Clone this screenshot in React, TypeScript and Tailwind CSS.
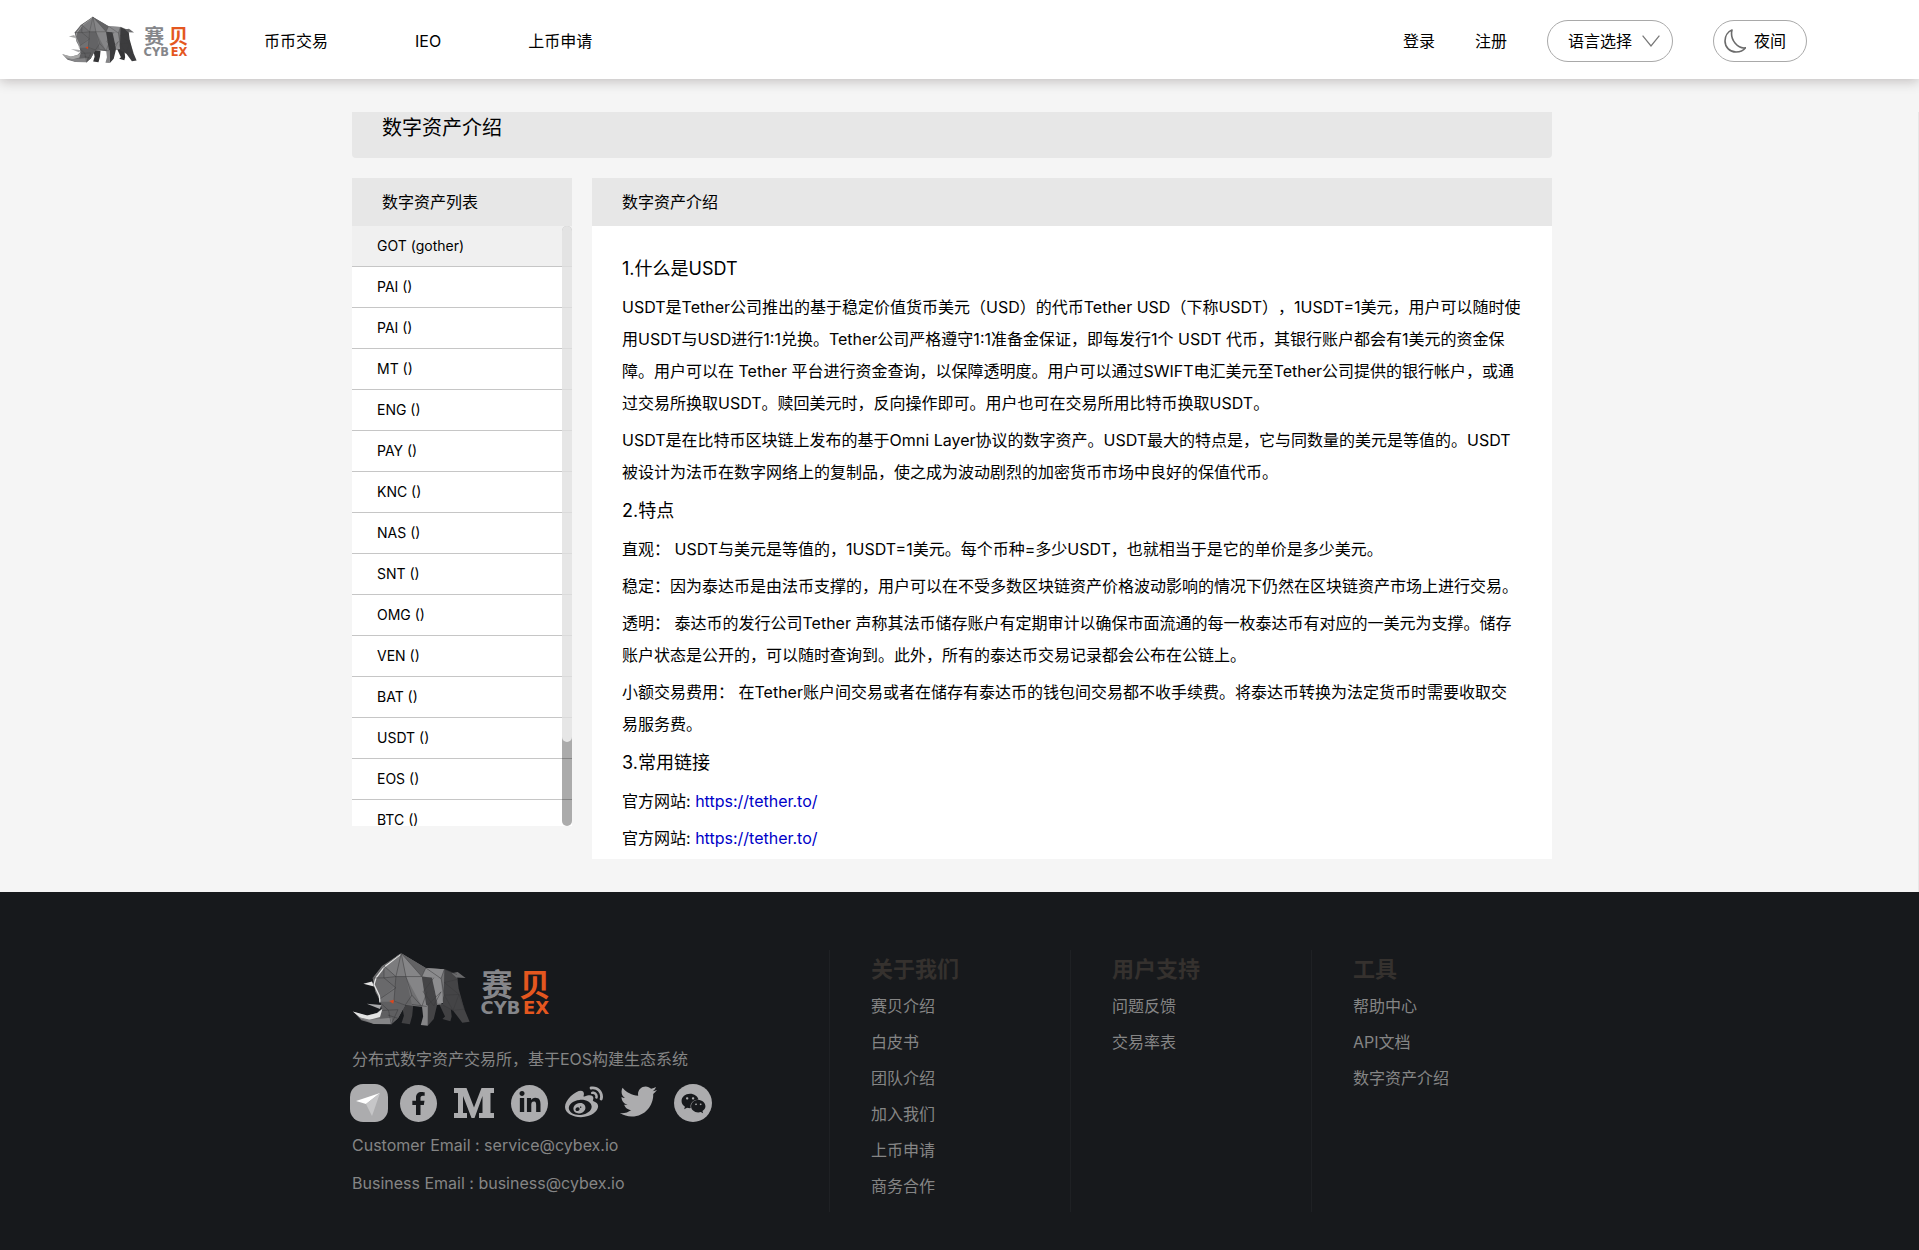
import React from "react";
import { FaFacebookF, FaLinkedinIn, FaTwitter, FaWeibo, FaWeixin } from "react-icons/fa";

type Tone = "light" | "dark";

const assets = [
  "GOT (gother)", "PAI ()", "PAI ()", "MT ()", "ENG ()", "PAY ()", "KNC ()", "NAS ()",
  "SNT ()", "OMG ()", "VEN ()", "BAT ()", "USDT ()", "EOS ()", "BTC ()",
];

const footerColumns = [
  { title: "关于我们", links: ["赛贝介绍", "白皮书", "团队介绍", "加入我们", "上币申请", "商务合作"] },
  { title: "用户支持", links: ["问题反馈", "交易率表"] },
  { title: "工具", links: ["帮助中心", "API文档", "数字资产介绍"] },
];

function Logo({ tone, className }: { tone: Tone; className: string }) {
  const rear = tone === "light" ? "#3c3c3e" : "#444446";
  const far = tone === "light" ? "#343436" : "#414143";
  const ridge = tone === "light" ? "#a6a6a6" : "#e4e4e4";
  return (
    <svg viewBox="24 20 604 226" className={className} role="img" aria-label="赛贝 CYBEX">
      <g strokeLinejoin="round">
        <path d="M172 180 178 212 171 234 196 238 203 212 206 182Z" fill={far} />
        <path d="M284 176 302 214 294 222 318 229 322 214 318 178Z" fill={far} />
        <path d="M300 72 338 88 343 130 360 192 376 230 354 233 326 196 296 180 288 112Z" fill={rear} />
        <path d="M322 84 340 80 364 98 336 97Z" fill="#6a6a6c" />
        <path d="M170 24 112 62 84 98 92 140 108 170 112 190 96 204 64 212 26 200 50 226 88 237 140 238 160 220 182 180 234 186 290 178 298 150 300 72 244 68Z" fill="#717173" />
        <path d="M170 24 184 94 154 94 118 62Z" fill="#7c7c7e" />
        <path d="M170 24 244 68 232 94Z" fill="#626264" />
        <path d="M170 24 232 94 248 182 232 184 184 94Z" fill="#858587" />
        <path d="M244 68 300 72 290 100 232 94Z" fill="#8b8b8d" />
        <path d="M232 94 268 98 278 180 268 222 250 242 246 184Z" fill={rear} />
        <path d="M232 180 250 180 250 242 229 240 236 214Z" fill="#858587" />
        <path d="M262 96 290 100 296 174 280 176Z" fill="#8d8d8f" />
        <path d="M84 98 118 62 118 98 154 94 150 124 108 160Z" fill="#69696b" />
        <path d="M154 94 184 94 202 178 180 180 148 168Z" fill="#636365" />
        <path d="M108 170 148 170 182 180 160 220 140 238 104 226 112 196Z" fill="#5f5f61" />
        <path d="M24 199 68 211 98 204 113 192 106 216 72 225 48 219Z" fill={ridge} />
        <path d="M40 216 76 224 140 218 142 237 88 237Z" fill="#858587" />
        <path d="M66 176 110 180 106 192Z" fill="#aaaaac" />
        <path d="M56 116 82 109 88 124Z" fill={ridge} />
        <path d="M168 27 120 64 94 98 88 118 104 152 106 172" fill="none" stroke={ridge} strokeWidth="4" />
        <path
          d="M170 24 118 62 118 98 84 98M118 62 154 94 170 24 184 94 154 94 118 98 154 128 108 160M154 94 148 168 182 180 202 150 184 94 232 94 170 24M202 150 232 184 248 140M232 94 244 68 290 100 300 72 338 88M290 100 300 150 344 148 300 112 341 102M300 150 326 196 344 148 360 192 326 196 296 180M268 98 236 140 268 182 290 140 246 184 202 178M112 196 160 194 140 238 132 196 106 172M160 220 130 210"
          fill="none"
          stroke="#38383a"
          strokeOpacity="0.75"
          strokeWidth="2"
        />
        <path d="M134 168 148 164 146 176Z" fill="#e0451b" />
      </g>
      <text x="412" y="153" fontSize="94" fill="#85868a" className="font-['Noto_Sans_CJK_SC',sans-serif] font-bold">赛</text>
      <text x="526" y="153" fontSize="94" fill="#e4571f" className="font-['Noto_Sans_CJK_SC',sans-serif] font-bold">贝</text>
      <text x="409" y="207" fontSize="54" fill="#85868a" className="font-['DejaVu_Sans',sans-serif] font-bold">CYB</text>
      <text x="537" y="207" fontSize="54" fill="#e4571f" className="font-['DejaVu_Sans',sans-serif] font-bold">EX</text>
    </svg>
  );
}

function Header() {
  return (
    <header className="relative z-10 flex h-[79px] items-center bg-white pr-[112px] pl-[62px] text-base shadow-[0_2px_12px_rgba(20,0,0,0.24)]">
      <a href="#" className="mr-[74px] block">
        <Logo tone="light" className="h-12 w-[128px]" />
      </a>
      <nav className="flex gap-[87px] pt-0.5">
        <a href="#">币币交易</a>
        <a href="#">IEO</a>
        <a href="#">上币申请</a>
      </nav>
      <div className="ml-auto flex items-center gap-10 pt-0.5">
        <a href="#">登录</a>
        <a href="#">注册</a>
        <button type="button" className="flex h-[42px] w-[126px] items-center justify-between rounded-full border border-[#a9a9a9] pr-3 pl-5">
          语言选择
          <svg viewBox="0 0 18 12" className="h-3 w-[18px]" fill="none" stroke="#777" strokeWidth="1.2">
            <path d="M.6.6 9 11 17.4.6" />
          </svg>
        </button>
        <button type="button" className="flex h-[42px] w-[94px] items-center justify-between rounded-full border border-[#a9a9a9] pr-5 pl-[10px]">
          <svg viewBox="0 0 22 24" className="h-6 w-[22px]" fill="none" stroke="#6b6b6b" strokeWidth="1.6" strokeLinejoin="round">
            <path d="M8 1C4 2.600 1 7 1 12c0 6.200 4.900 11 11 11 4 0 7.600-1.500 9.600-4.200C14.500 20 5.500 11.500 8 1Z" />
          </svg>
          夜间
        </button>
      </div>
    </header>
  );
}

function AssetList() {
  return (
    <section className="w-[220px] shrink-0">
      <h2 className="flex h-12 items-center bg-[#e7e7e7] pl-[30px] text-base">数字资产列表</h2>
      <div className="relative h-[600px] overflow-hidden bg-white">
        <ul className="text-sm">
          {assets.map((name, i) => (
            <li key={i} className={i === 0 ? "border-b border-[#c6c6c6] bg-[#f0f0f0]" : "border-b border-[#c6c6c6]"}>
              <a href="#" className="block pl-[25px] leading-10">{name}</a>
            </li>
          ))}
        </ul>
        <div className="absolute inset-y-0 right-0 w-[10px] rounded-full bg-black/33">
          <div className="h-[516px] rounded-full bg-white/70" />
        </div>
      </div>
    </section>
  );
}

function Heading({ children }: { children: React.ReactNode }) {
  return <h3 className="mb-[5px] text-lg leading-[35px]">{children}</h3>;
}

function Para({ children }: { children: React.ReactNode }) {
  return <p className="mb-[5px] text-base leading-8">{children}</p>;
}

function Article() {
  return (
    <article className="min-w-0 flex-1 bg-white">
      <h2 className="flex h-12 items-center bg-[#e7e7e7] pl-[30px] text-base">数字资产介绍</h2>
      <div className="px-[30px] pt-[25px]">
        <Heading>1.什么是USDT</Heading>
        <Para>USDT是Tether公司推出的基于稳定价值货币美元（USD）的代币Tether USD（下称USDT），1USDT=1美元，用户可以随时使用USDT与USD进行1:1兑换。Tether公司严格遵守1:1准备金保证，即每发行1个 USDT 代币，其银行账户都会有1美元的资金保障。用户可以在 Tether 平台进行资金查询，以保障透明度。用户可以通过SWIFT电汇美元至Tether公司提供的银行帐户，或通过交易所换取USDT。赎回美元时，反向操作即可。用户也可在交易所用比特币换取USDT。</Para>
        <Para>USDT是在比特币区块链上发布的基于Omni Layer协议的数字资产。USDT最大的特点是，它与同数量的美元是等值的。USDT被设计为法币在数字网络上的复制品，使之成为波动剧烈的加密货币市场中良好的保值代币。</Para>
        <Heading>2.特点</Heading>
        <Para>直观： USDT与美元是等值的，1USDT=1美元。每个币种=多少USDT，也就相当于是它的单价是多少美元。</Para>
        <Para>稳定：因为泰达币是由法币支撑的，用户可以在不受多数区块链资产价格波动影响的情况下仍然在区块链资产市场上进行交易。</Para>
        <Para>透明： 泰达币的发行公司Tether 声称其法币储存账户有定期审计以确保市面流通的每一枚泰达币有对应的一美元为支撑。储存账户状态是公开的，可以随时查询到。此外，所有的泰达币交易记录都会公布在公链上。</Para>
        <Para>小额交易费用： 在Tether账户间交易或者在储存有泰达币的钱包间交易都不收手续费。将泰达币转换为法定货币时需要收取交易服务费。</Para>
        <Heading>3.常用链接</Heading>
        <Para>官方网站: <a href="https://tether.to/" className="text-[#0000c8]">https://tether.to/</a></Para>
        <Para>官方网站: <a href="https://tether.to/" className="text-[#0000c8]">https://tether.to/</a></Para>
      </div>
    </article>
  );
}

function SocialLinks() {
  return (
    <div className="-ml-0.5 flex h-10 items-center gap-[17px] text-[#acacae]">
      <a href="#" aria-label="Telegram" className="-mr-[5px]">
        <svg viewBox="0 0 38 38" className="size-[38px]">
          <rect width="38" height="38" rx="13" fill="currentColor" />
          <path d="M6 17 30 9 16 20Z" fill="#fff" />
          <path d="M30 9 22 32 16 20Z" fill="#c6c6c8" />
        </svg>
      </a>
      <a href="#" aria-label="Facebook" className="flex size-[37px] items-center justify-center rounded-full bg-[#acacae] text-[#17191c]">
        <FaFacebookF size={23} />
      </a>
      <a href="#" aria-label="Medium">
        <svg viewBox="0 0 40 30" className="h-[30px] w-10" fill="currentColor">
          <path d="M0 0H12.500L20 19.500 27.500 0H40V5H36.500V25H40V30H25V25H28.500V8L20.500 30H17.500L9 8V25H13V30H0V25H4V5H0Z" />
        </svg>
      </a>
      <a href="#" aria-label="LinkedIn" className="flex size-[37px] items-center justify-center rounded-full bg-[#acacae] text-[#17191c]">
        <FaLinkedinIn size={24} />
      </a>
      <a href="#" aria-label="Weibo"><FaWeibo size={38} /></a>
      <a href="#" aria-label="Twitter" className="pb-1"><FaTwitter size={37} /></a>
      <a href="#" aria-label="WeChat" className="flex size-[38px] items-center justify-center rounded-full bg-[#acacae] text-[#17191c]">
        <FaWeixin size={25} />
      </a>
    </div>
  );
}

function Footer() {
  return (
    <footer className="flex-1 bg-[#17191c] pt-[58px] pr-[15px] pb-[38px] text-[#858585]">
      <div className="mx-auto flex max-w-[1200px]">
        <div className="flex-1">
          <Logo tone="dark" className="mt-0.5 h-[75px] w-[202px]" />
          <p className="mt-5 leading-6">分布式数字资产交易所，基于EOS构建生态系统</p>
          <div className="mt-3"><SocialLinks /></div>
          <p className="mt-[3px] leading-[38px]">Customer Email : service@cybex.io</p>
          <p className="leading-[38px]">Business Email : business@cybex.io</p>
        </div>
        {footerColumns.map((col) => (
          <nav key={col.title} aria-label={col.title} className="h-[262px] w-[241px] border-l border-[#1f2124] pl-[41px]">
            <h4 className="text-[22px] leading-[38px] font-bold text-[#35312e]">{col.title}</h4>
            <ul>
              {col.links.map((link) => (
                <li key={link}><a href="#" className="leading-9">{link}</a></li>
              ))}
            </ul>
          </nav>
        ))}
      </div>
    </footer>
  );
}

export default function App() {
  return (
    <div className="flex min-h-screen flex-col bg-[#f5f5f5] font-[Inter,'Noto_Sans_CJK_SC',sans-serif] text-black [text-spacing-trim:space-all]" lang="zh-CN">
      <Header />
      <main className="mt-[33px] border-r border-[#e7e7e7] pr-[14px] pb-[33px]">
        <div className="mx-auto max-w-[1200px]">
          <h1 className="h-[46px] rounded-b bg-[#e7e7e7] pl-[30px] text-xl leading-8">数字资产介绍</h1>
          <div className="mt-5 flex items-start gap-5">
            <AssetList />
            <Article />
          </div>
        </div>
      </main>
      <Footer />
    </div>
  );
}
